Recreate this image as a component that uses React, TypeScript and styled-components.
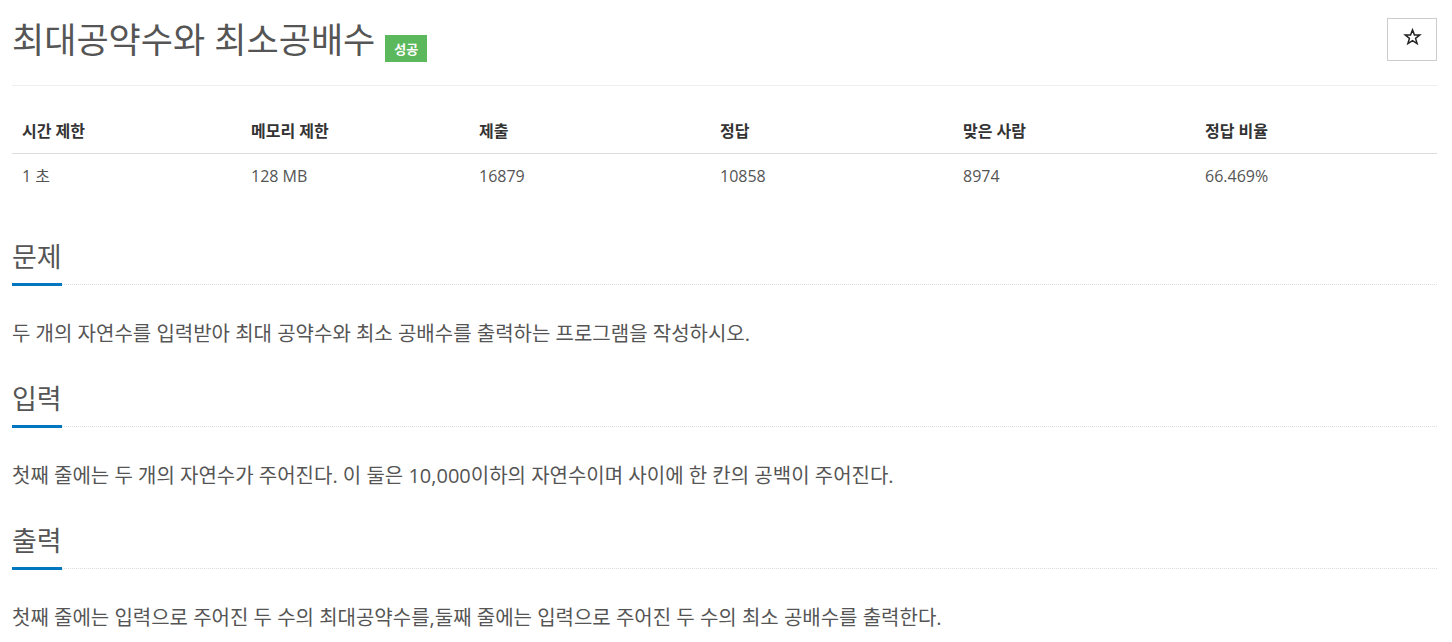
import React from "react";
import styled, { createGlobalStyle } from "styled-components";

const GlobalStyle = createGlobalStyle`
  html, body {
    margin: 0;
    padding: 0;
    background: #ffffff;
  }
  body {
    font-family: "Open Sans", "Noto Sans CJK KR", sans-serif;
    color: #555555;
    font-size: 14px;
  }
  * { box-sizing: border-box; }
`;

const Page = styled.div`
  padding: 18px 15px 0 12px;
`;

const Header = styled.div`
  display: flex;
  align-items: center;
  justify-content: space-between;
  height: 43px;
`;

const Title = styled.h1`
  margin: 0;
  display: flex;
  align-items: center;
  font-family: "Open Sans", "Noto Sans CJK KR", sans-serif;
  font-weight: 400;
  font-size: 35px;
  line-height: 40px;
  color: #555555;
`;

const Badge = styled.span`
  margin-left: 10px;
  margin-top: 17px;
  background: #5cb85c;
  color: #ffffff;
  font-weight: 700;
  font-size: 13px;
  line-height: 27px;
  height: 27px;
  padding: 0 9px;
  font-family: "Noto Sans CJK KR", sans-serif;
`;

const StarButton = styled.button`
  width: 50px;
  height: 43px;
  background: #ffffff;
  border: 1px solid #cccccc;
  border-radius: 0;
  padding: 0 0 6px 0;
  display: flex;
  align-items: center;
  justify-content: center;
  color: #222222;
  cursor: pointer;
`;

const Rule = styled.div`
  margin-top: 24px;
  border-top: 1px solid #eeeeee;
`;

const Table = styled.table`
  margin-top: 23px;
  width: 100%;
  border-collapse: collapse;
  table-layout: fixed;
`;

const Th = styled.th<{ $w?: number }>`
  width: ${(p) => (p.$w ? `${p.$w}px` : "auto")};
  text-align: left;
  font-family: "Open Sans", "Noto Sans CJK KR", sans-serif;
  font-weight: 700;
  font-size: 16px;
  color: #333333;
  padding: 8px 10px;
  line-height: 28px;
  border-bottom: 1px solid #dddddd;
`;

const Td = styled.td`
  text-align: left;
  font-size: 16px;
  color: #555555;
  padding: 8px 10px;
  line-height: 28px;
`;

const Section = styled.section<{ $first?: boolean }>`
  margin-top: ${(p) => (p.$first ? "44px" : "35px")};
`;

const Headline = styled.div`
  border-bottom: 1px dotted #dddddd;
`;

const HeadTitle = styled.h2`
  display: inline-block;
  margin: 0 0 -2px 0;
  padding-bottom: 11px;
  border-bottom: 3px solid #0076c0;
  font-family: "Open Sans", "Noto Sans CJK KR", sans-serif;
  font-weight: 400;
  font-size: 27px;
  line-height: 30px;
  color: #555555;
`;

const Text = styled.p`
  margin: 34px 0 0 0;
  font-size: 20px;
  line-height: 30px;
  color: #555555;
`;

const StarIcon = () => (
  <svg width="19" height="18" viewBox="0 0 24 24" fill="none" stroke="#222" strokeWidth="2" strokeLinejoin="miter">
    <polygon points="12,2.5 14.6,9.2 21.7,9.4 16.1,13.8 18.1,20.7 12,16.7 5.9,20.7 7.9,13.8 2.3,9.4 9.4,9.2" />
  </svg>
);

const headers: { label: string; w?: number }[] = [
  { label: "시간 제한", w: 229 },
  { label: "메모리 제한", w: 228 },
  { label: "제출", w: 241 },
  { label: "정답", w: 243 },
  { label: "맞은 사람", w: 242 },
  { label: "정답 비율" },
];

const values = ["1 초", "128 MB", "16879", "10858", "8974", "66.469%"];

const sections = [
  { title: "문제", text: "두 개의 자연수를 입력받아 최대 공약수와 최소 공배수를 출력하는 프로그램을 작성하시오." },
  { title: "입력", text: "첫째 줄에는 두 개의 자연수가 주어진다. 이 둘은 10,000이하의 자연수이며 사이에 한 칸의 공백이 주어진다." },
  { title: "출력", text: "첫째 줄에는 입력으로 주어진 두 수의 최대공약수를,둘째 줄에는 입력으로 주어진 두 수의 최소 공배수를 출력한다." },
];

export default function App() {
  return (
    <>
      <GlobalStyle />
      <Page>
        <Header>
          <Title>
            최대공약수와 최소공배수
            <Badge>성공</Badge>
          </Title>
          <StarButton aria-label="즐겨찾기">
            <StarIcon />
          </StarButton>
        </Header>
        <Rule />
        <Table>
          <thead>
            <tr>
              {headers.map((h) => (
                <Th key={h.label} $w={h.w}>
                  {h.label}
                </Th>
              ))}
            </tr>
          </thead>
          <tbody>
            <tr>
              {values.map((v) => (
                <Td key={v}>{v}</Td>
              ))}
            </tr>
          </tbody>
        </Table>
        {sections.map((s, i) => (
          <Section key={s.title} $first={i === 0}>
            <Headline>
              <HeadTitle>{s.title}</HeadTitle>
            </Headline>
            <Text>{s.text}</Text>
          </Section>
        ))}
      </Page>
    </>
  );
}
